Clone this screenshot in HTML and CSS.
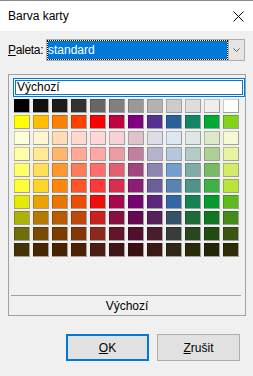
FILE: index.html
```html
<!DOCTYPE html>
<html lang="cs">
    <head>
        <meta charset="utf-8">
        <title>Barva karty</title>
        <link rel="stylesheet" href="styles.css">
    </head>
    <body>
        <div class="dialog">
            <div class="titlebar">
                <span class="title">Barva karty</span>
                <svg class="close" width="11" height="11" viewBox="0 0 11 11">
                    <path d="M0.5 0.5 L10.5 10.5 M10.5 0.5 L0.5 10.5" stroke="#000" stroke-width="1" fill="none"/>
                </svg>
            </div>

            <div class="content">
                <div class="palette-row">
                    <label><u>P</u>aleta:</label>
                    <div class="combo">
                        <div class="combo-value">standard</div>
                        <div class="combo-button">
                            <svg width="7" height="4" viewBox="0 0 7 4">
                                <polyline points="0.5,0.5 3.5,3.5 6.5,0.5" stroke="#555" stroke-width="1" fill="none"/>
                            </svg>
                        </div>
                    </div>
                </div>

                <div class="frame">
                    <div class="name-box">Výchozí</div>
                    <div class="swatches" id="swatches"></div>
                    <div class="separator"></div>
                    <div class="frame-label">Výchozí</div>
                </div>

                <div class="buttons">
                    <button class="btn default"><u>O</u>K</button>
                    <button class="btn"><u>Z</u>rušit</button>
                </div>
            </div>
        </div>

        <script>
            // standard palette, 12 columns per row
            const palette = [
                '000000','111111','1c1c1c','333333','666666','808080','999999','b2b2b2','cccccc','dddddd','eeeeee','ffffff',
                'ffff00','ffbf00','ff8000','ff4000','ff0000','bf0041','800080','55308d','2a6099','158466','00a933','81d41a',
                'ffffd7','fff5ce','ffdbb6','ffd8ce','ffd7d7','f7d1d5','e0c2cd','dedce6','dee6ef','dee7e5','dde8cb','f6f9d4',
                'ffffa6','ffe994','ffb66c','ffaa95','ffa6a6','ec9ba4','bf819e','b7b3ca','b4c7dc','b3cac7','afd095','e8f2a1',
                'ffff6d','ffde59','ff972f','ff7b59','ff6d6d','e16173','a1467e','8e86ae','729fcf','81aca6','77bc65','d4ea6b',
                'ffff38','ffd428','ff860d','ff5429','ff3838','d62e4e','8d1d75','6b5e9b','5983b0','50938a','3faf46','bbe33d',
                'e6e905','e8a202','ea7500','ed4c05','f10d0c','a7074b','780373','5b277d','3465a4','168253','069a2e','5eb91e',
                'acb20c','b47804','b85c00','be480a','c9211e','861141','650953','55215b','355269','1e6a39','127622','468a1a',
                '706e0c','784b04','7b3d00','813709','8d281e','611729','4e102d','481d32','383d3c','28471f','224b12','395511',
                '443205','472702','492300','4b2204','4c1d14','3f1616','3a1014','3a1a12','31261a','2b2a09','24250a','2e2c07'
            ];

            const grid = document.getElementById('swatches');
            for (let i = 0; i < palette.length; i++) {
                const cell = document.createElement('div');
                cell.className = 'swatch';
                cell.style.backgroundColor = '#' + palette[i];
                grid.appendChild(cell);
            }
        </script>
    </body>
</html>
```

FILE: styles.css
```css
* {
    box-sizing: border-box;
}

html, body {
    margin: 0;
    padding: 0;
}

body {
    font-family: "Liberation Sans", Arial, sans-serif;
    font-size: 12px;
    color: #000;
    background: #f0f0f0;
}

.dialog {
    width: 253px;
    height: 376px;
    background: #f0f0f0;
    border-top: 1px solid #8a8a8a;
}

.titlebar {
    height: 30px;
    background: #fff;
    display: flex;
    align-items: center;
    justify-content: space-between;
    padding: 0 9px 0 8px;
}

.close {
    display: block;
}

.content {
    padding: 8px 8px 0 8px;
}

.palette-row {
    display: flex;
    align-items: center;
    height: 22px;
}

.palette-row label {
    flex: 1;
    letter-spacing: -0.3px;
}

.combo {
    width: 199px;
    height: 22px;
    display: flex;
    border: 1px solid #adadad;
    background: #e1e1e1;
}

.combo-value {
    flex: 1;
    color: #fff;
    line-height: 18px;
    border: 1px dotted #000;
    background: linear-gradient(#0078d7, #0078d7) padding-box, linear-gradient(#fff, #fff) border-box;
}

.combo-button {
    width: 16px;
    border-left: 1px solid #adadad;
    background: #e5e5e5;
    display: flex;
    align-items: center;
    justify-content: center;
}

.combo-button svg {
    display: block;
}

.frame {
    margin-top: 13px;
    width: 238px;
    height: 242px;
    border: 1px solid #a0a0a0;
    padding-top: 3px;
    display: flex;
    flex-direction: column;
}

.name-box {
    margin-left: 4px;
    width: 232px;
    height: 19px;
    background: #fff;
    border: 1px solid #0078d7;
    box-shadow: inset 0 0 0 1px #fff, inset 0 0 0 2px #0078d7;
    padding-left: 3px;
    line-height: 17px;
}

.swatches {
    margin: 2px 0 0 5px;
    display: grid;
    grid-template-columns: repeat(12, 16px);
    grid-auto-rows: 14px;
    column-gap: 3px;
    row-gap: 2px;
}

.swatch {
    border-right: 1px solid #a0a0a0;
    border-bottom: 1px solid #a0a0a0;
    box-shadow: inset 1px 1px 0 rgba(0, 0, 0, 0.2);
}

.separator {
    margin: 38px 0 0 2px;
    width: 230px;
    height: 1px;
    background: #a0a0a0;
}

.frame-label {
    height: 19px;
    padding-top: 1px;
    line-height: 18px;
    text-align: center;
}

.buttons {
    margin-top: 18px;
    margin-right: 5px;
    display: flex;
    justify-content: flex-end;
    gap: 8px;
}

.btn {
    width: 83px;
    height: 27px;
    padding: 0;
    font: inherit;
    color: #000;
    background: #e1e1e1;
    border: 1px solid #adadad;
}

.btn.default {
    border: 2px solid #0078d7;
}
```
